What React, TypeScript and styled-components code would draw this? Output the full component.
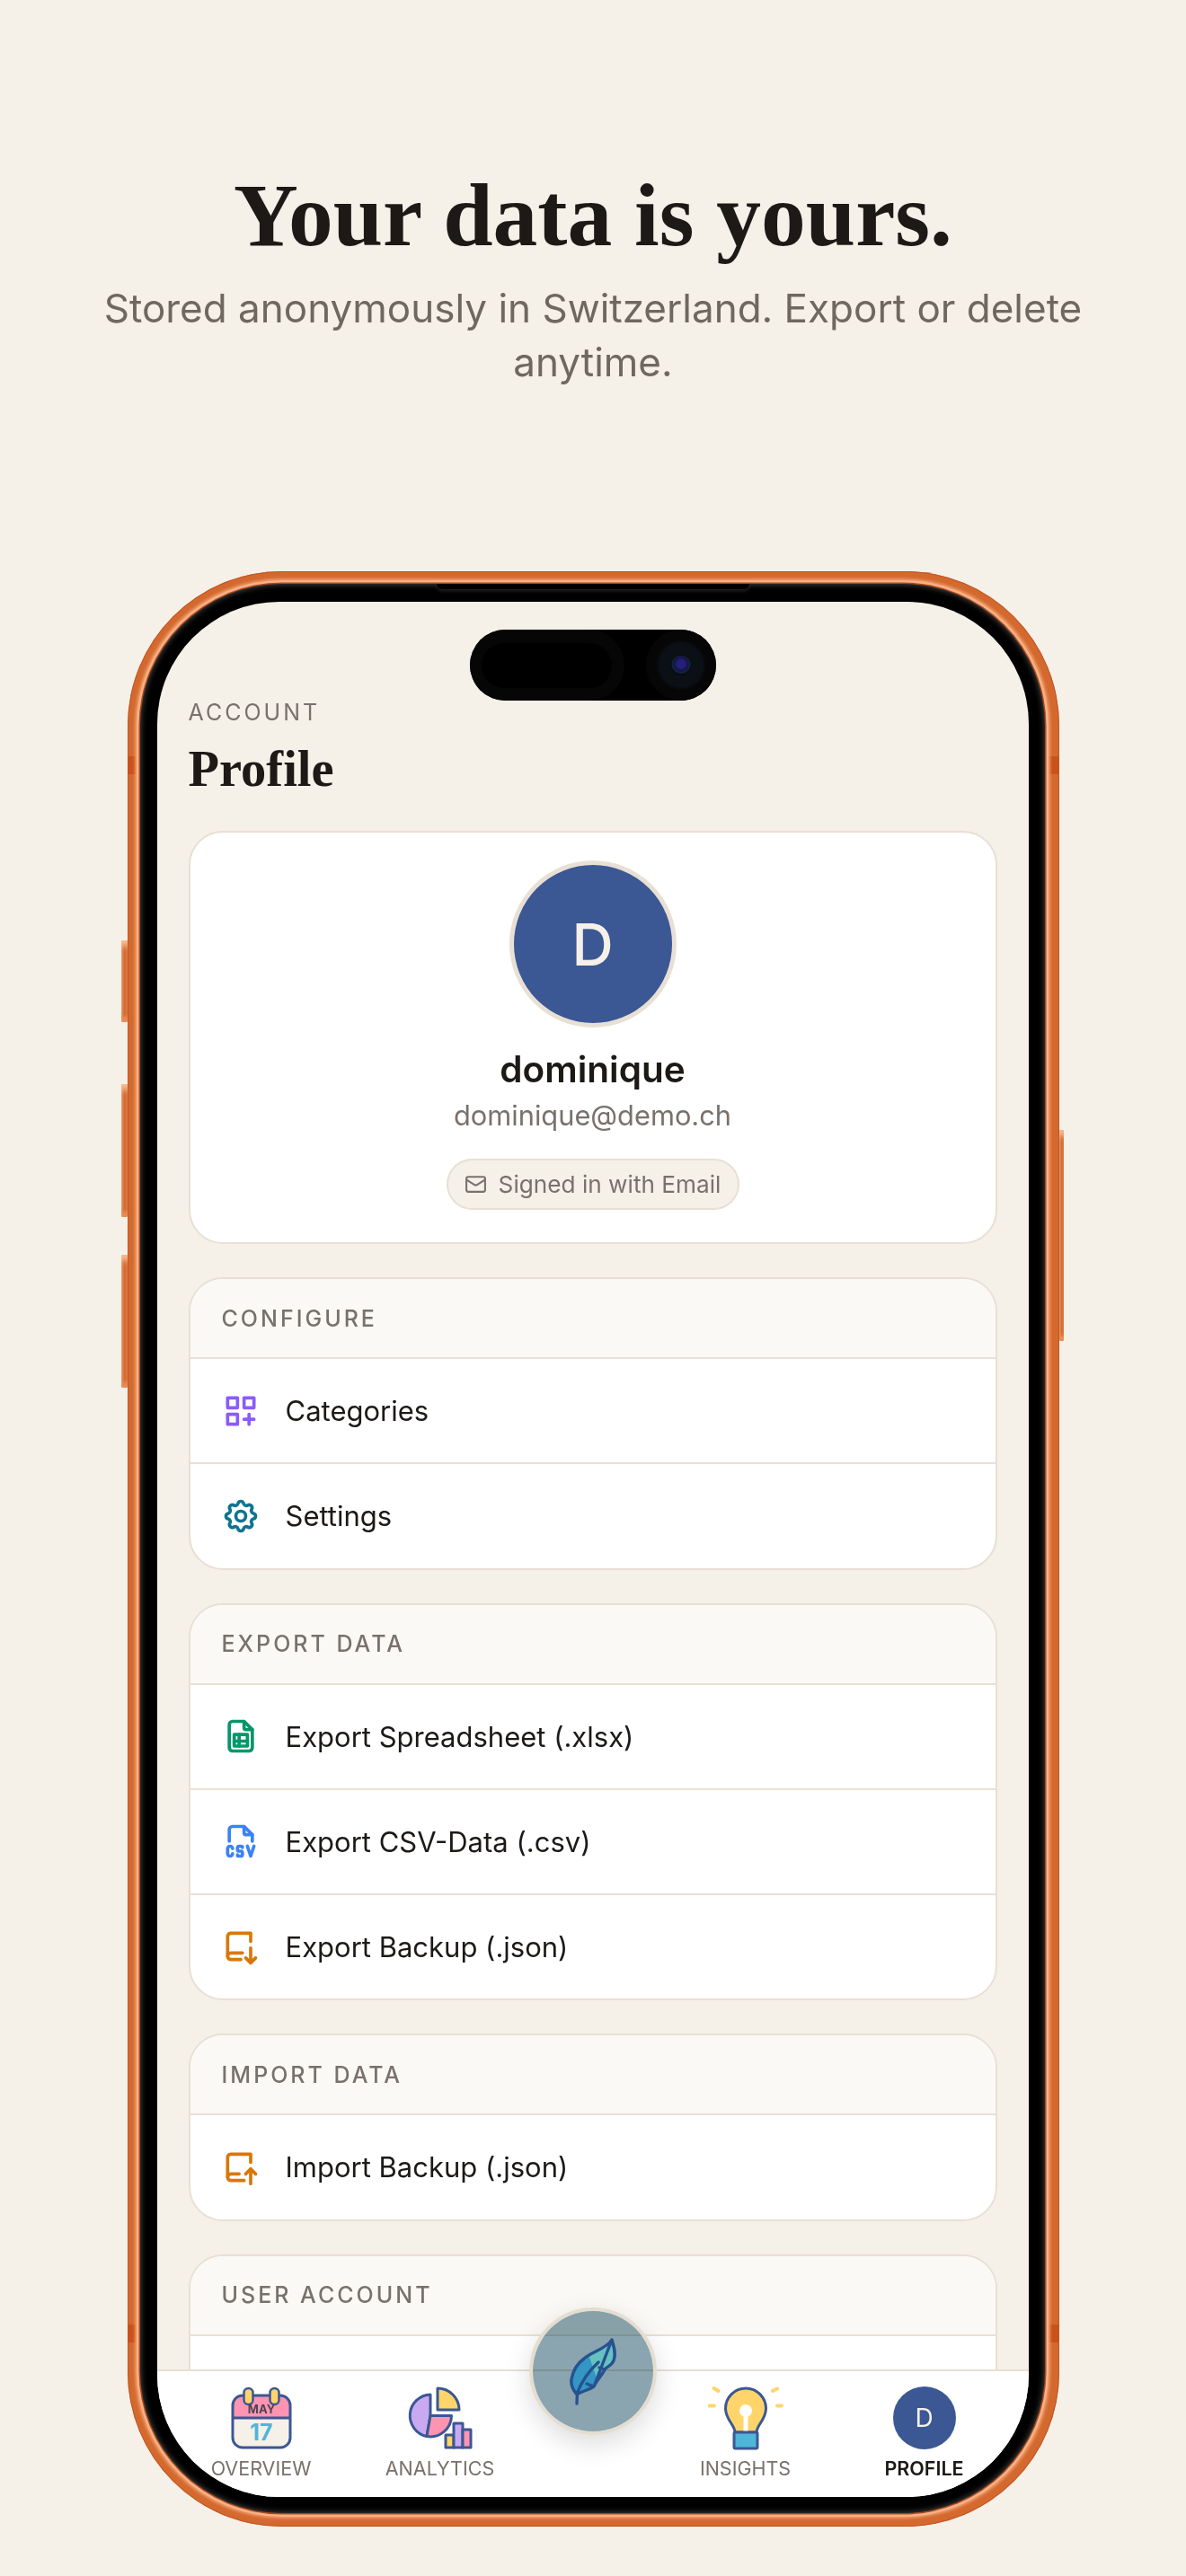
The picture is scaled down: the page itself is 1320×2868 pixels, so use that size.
import styled, { createGlobalStyle } from "styled-components";
import { Mail } from "lucide-react";
import {
  TbBookDownload,
  TbBookUpload,
  TbCategoryPlus,
  TbFileSpreadsheet,
  TbFileTypeCsv,
  TbSettings,
} from "react-icons/tb";
import type { ReactNode } from "react";

const ink = "#1c1917";
const muted = "#78716c";
const line = "#e8e0d4";
const cream = "#f5f0e8";
const navy = "#3b5794";
const sans = `Inter, "Noto Sans", sans-serif`;
const serif = `"Liberation Serif", serif`;

const Global = createGlobalStyle`
  html, body { margin: 0; padding: 0; background: ${cream}; }
  * { box-sizing: border-box; }
`;

const Page = styled.div`
  width: 1320px;
  height: 2868px;
  overflow: hidden;
  background: ${cream};
  display: flex;
  flex-direction: column;
  align-items: center;
  font-family: ${sans};
`;

const Hero = styled.header`
  width: 1120px;
  height: 636px;
  padding-top: 184px;
  text-align: center;
`;

const Headline = styled.h1`
  margin: 0;
  font-family: ${serif};
  font-size: 99.5px;
  line-height: 112px;
  font-weight: 700;
  color: ${ink};
`;

const Subhead = styled.p`
  margin: 17px 0 0;
  font-size: 44px;
  line-height: 60px;
  color: #6f6860;
`;

const Frame = styled.div`
  position: relative;
  width: 1037px;
  height: 2177px;
  flex: none;
  padding: 14px 16px 15px 14px;
  border-radius: 172px;
  background: #d4692f;
  box-shadow: inset 0 0 0 1px #bf5722;
`;

const Band = styled.span<{ $side: "left" | "right"; $at: "top" | "bottom" }>`
  position: absolute;
  ${(p) => p.$side}: 0;
  ${(p) => (p.$at === "top" ? "top: 206px" : "bottom: 205px")};
  width: 14px;
  height: 20px;
  background: #c9521b;
`;

const SideButton = styled.span<{ $side: "left" | "right"; $top: number; $height: number }>`
  position: absolute;
  ${(p) => p.$side}: ${(p) => (p.$side === "left" ? "-7px" : "-5px")};
  top: ${(p) => p.$top}px;
  width: ${(p) => (p.$side === "left" ? 7 : 5)}px;
  height: ${(p) => p.$height}px;
  border-radius: 2px;
  background: linear-gradient(90deg, #ea9763 0%, #d26a33 50%, #d9763c 100%);
  box-shadow: inset 0 10px 6px -4px #f7bb92, inset 0 -12px 4px -6px #e98d58;
`;

const Bezel = styled.div`
  position: relative;
  width: 100%;
  height: 100%;
  padding: 20px 18px 18px 19px;
  border-radius: 158px;
  background: #000;
  box-shadow: 0 0 0 1.5px #a9481a, 0 0 0 4px #f6b088, 0 0 3px 6px #ef9a66,
    inset 0 0 7px 0 rgba(255, 255, 255, 0.34);
`;

const TopEdge = styled.span`
  position: absolute;
  top: 0;
  left: 330px;
  width: 348px;
  height: 6px;
  border-radius: 0 0 12px 12px;
  background: #000;
  box-shadow: 0 2px 4px rgba(255, 255, 255, 0.14);
`;

const Screen = styled.div`
  position: relative;
  width: 970px;
  height: 2110px;
  border-radius: 136px;
  overflow: hidden;
  background: ${cream};
  display: flex;
  flex-direction: column;
`;

const Island = styled.div`
  position: absolute;
  top: 31px;
  left: 348px;
  width: 274px;
  height: 79px;
  border-radius: 40px;
  background: #000;
  display: flex;
  align-items: center;
  justify-content: space-between;
`;

const SensorRing = styled.span`
  width: 172px;
  height: 79px;
  border-radius: 40px;
  background: #060606;
  display: grid;
  place-items: center;
`;

const Sensor = styled.span`
  width: 145px;
  height: 50px;
  border-radius: 25px;
  background: #000;
`;

const CameraWell = styled.span`
  width: 78px;
  height: 79px;
  border-radius: 50%;
  display: grid;
  place-items: center;
  background: radial-gradient(circle, #0b0f16 0 24px, #060606 28px);
`;

const Lens = styled.span`
  width: 22px;
  height: 22px;
  border-radius: 50%;
  background: radial-gradient(circle at 50% 42%, #241f78 0 5px, #171048 7px, #0e2a3a 10px, #090b12 11px);
`;

const Main = styled.main`
  flex: 1;
  min-height: 0;
  overflow: hidden;
  padding: 106px 35px 0;
  display: flex;
  flex-direction: column;
`;

const Eyebrow = styled.div`
  font-size: 25px;
  line-height: 34px;
  letter-spacing: 3px;
  color: ${muted};
`;

const Title = styled.h2`
  margin: 14px 0 37px;
  font-family: ${serif};
  font-size: 56.5px;
  line-height: 64px;
  font-weight: 700;
  color: ${ink};
`;

const Card = styled.section`
  flex: none;
  border: 2.5px solid ${line};
  border-radius: 38px;
  overflow: hidden;
  background: #fff;
  margin-bottom: 37px;
`;

const ProfileBody = styled.div`
  height: 456px;
  padding-top: 31px;
  display: flex;
  flex-direction: column;
  align-items: center;
`;

const Avatar = styled.div`
  width: 186px;
  height: 186px;
  border-radius: 50%;
  border: 5px solid ${line};
  background: ${navy};
  color: ${cream};
  font-size: 64px;
  font-weight: 500;
  display: grid;
  place-items: center;
`;

const Name = styled.div`
  margin-top: 23px;
  font-size: 40.5px;
  line-height: 48px;
  font-weight: 600;
  color: ${ink};
`;

const Email = styled.div`
  margin-top: 6px;
  font-size: 30.8px;
  line-height: 42px;
  color: ${muted};
`;

const Pill = styled.div`
  margin-top: 27px;
  width: 326px;
  height: 57px;
  border-radius: 29px;
  border: 2.5px solid ${line};
  background: ${cream};
  color: ${muted};
  font-size: 26.2px;
  display: flex;
  align-items: center;
  justify-content: center;
  gap: 13px;
  white-space: nowrap;
`;

const CardHead = styled.div`
  height: 89px;
  padding-left: 35px;
  display: flex;
  align-items: center;
  background: #fbf9f6;
  border-bottom: 2.5px solid ${line};
  font-size: 25px;
  font-weight: 500;
  letter-spacing: 3px;
  color: ${muted};
`;

const Row = styled.div<{ $tone: string }>`
  height: 117px;
  padding-left: 34px;
  display: flex;
  align-items: center;
  gap: 28px;
  font-size: 31px;
  color: ${ink};
  border-bottom: 2.5px solid ${line};
  svg {
    flex: none;
    color: ${(p) => p.$tone};
  }
  &:last-child {
    height: 115.5px;
    border-bottom: none;
  }
`;

const TabBar = styled.nav`
  flex: none;
  height: 142px;
  border-top: 2.5px solid ${line};
  background: #fff;
  display: grid;
  grid-template-columns: 232px 166px 174px 166px 232px;
`;

const Tab = styled.div<{ $active?: boolean }>`
  padding-top: 16px;
  display: flex;
  flex-direction: column;
  align-items: center;
  font-size: 21.5px;
  line-height: 26px;
  font-weight: ${(p) => (p.$active ? 600 : 400)};
  color: ${(p) => (p.$active ? ink : muted)};
`;

const TabIcon = styled.div`
  height: 72px;
  margin-bottom: 7px;
  display: flex;
  align-items: center;
  justify-content: center;
`;

const TabAvatar = styled.div`
  width: 70px;
  height: 70px;
  border-radius: 50%;
  background: ${navy};
  color: ${cream};
  font-size: 28px;
  font-weight: 400;
  display: grid;
  place-items: center;
`;

const Fab = styled.button`
  position: absolute;
  left: calc(50% - 71px);
  bottom: 69px;
  width: 142px;
  height: 142px;
  padding: 0;
  border-radius: 50%;
  border: 4px solid #e5ddd0;
  background: transparent;
  box-shadow: 0 10px 30px rgba(0, 0, 0, 0.14);
  display: grid;
  place-items: center;
  &::before {
    content: "";
    position: absolute;
    inset: 0;
    border-radius: 50%;
    background: #8aa5af;
    mix-blend-mode: multiply;
  }
  svg {
    position: relative;
  }
`;

function CalendarIcon() {
  return (
    <svg width="68" height="70" viewBox="0 0 68 70">
      <rect x="2" y="10" width="64" height="58" rx="11" fill={cream} />
      <path d="M2 35V21a11 11 0 0 1 11-11h42a11 11 0 0 1 11 11v14z" fill="#ff94b2" />
      <rect x="2" y="10" width="64" height="58" rx="11" fill="none" stroke={navy} strokeWidth="3" />
      <path d="M2 35h64" stroke={navy} strokeWidth="3" />
      <rect x="14.5" y="2" width="10" height="18" rx="5" fill="#ffd56b" stroke={navy} strokeWidth="2.5" />
      <rect x="43.5" y="2" width="10" height="18" rx="5" fill="#ffd56b" stroke={navy} strokeWidth="2.5" />
      <text x="34" y="30" textAnchor="middle" fontFamily={sans} fontSize="13" fontWeight="700" fill="#4a4552">
        MAY
      </text>
      <text x="34" y="60" textAnchor="middle" fontFamily={sans} fontSize="25" fontWeight="700" fill="#4fb6d8">
        17
      </text>
    </svg>
  );
}

function AnalyticsIcon() {
  return (
    <svg width="72" height="70" viewBox="0 0 72 70">
      <path d="M25 9A23.5 23.5 0 0 0 21 55.5L25 32.5z" fill="#c9aaf0" stroke={navy} strokeWidth="3" strokeLinejoin="round" />
      <path d="M25 32.5H48.5A23.5 23.5 0 0 1 21 55.5z" fill="#ff94b2" stroke={navy} strokeWidth="3" strokeLinejoin="round" />
      <path d="M33 2V26H57A24 24 0 0 0 33 2z" fill="#ffd56b" stroke={navy} strokeWidth="3" strokeLinejoin="round" />
      <rect x="42" y="54" width="9" height="14" fill="#ffd56b" stroke={navy} strokeWidth="3" strokeLinejoin="round" />
      <rect x="51" y="41" width="10" height="27" fill="#c9aaf0" stroke={navy} strokeWidth="3" strokeLinejoin="round" />
      <rect x="61" y="48" width="9" height="20" fill="#ff94b2" stroke={navy} strokeWidth="3" strokeLinejoin="round" />
    </svg>
  );
}

function InsightsIcon() {
  return (
    <svg width="84" height="72" viewBox="0 0 84 72">
      <path d="M6.5 2L11.5 5M1.5 21.5H7M77 2.5L72 5M77 21.5H82" stroke="#ffd56b" strokeWidth="4" strokeLinecap="round" transform="translate(0 1)" />
      <path
        d="M30 52C30 44 19.5 38 19.5 25.5A22.5 22.5 0 0 1 64.5 25.5C64.5 38 54 44 54 52z"
        fill="#ffd56b"
        stroke={navy}
        strokeWidth="3"
        strokeLinejoin="round"
      />
      <circle cx="42" cy="28" r="7" fill="#fff" />
      <rect x="39.5" y="30" width="5" height="22" fill="#fff" />
      <rect x="29" y="52" width="26" height="18" rx="1.5" fill="#4fb6d8" stroke={navy} strokeWidth="3" strokeLinejoin="round" />
    </svg>
  );
}

function FeatherIcon() {
  return (
    <svg width="54" height="76" viewBox="0 0 54 76">
      <path
        d="M48 3C50 10 53 18 50 26C48 32 42 33 40 36C37 43 31 48 28 55C21 60 14 60 9 64C4 58 2 53 3 47C5 36 10 29 17 24C26 16 42 13 48 3z"
        fill="#3396c4"
      />
      <path d="M48 3C50 10 53 18 50 26C48 32 42 33 40 36C37 40 34 42 31 45L22 20C30 15 42 13 48 3z" fill="#66c2c0" />
      <path
        d="M48 3C50 10 53 18 50 26C48 32 42 33 40 36L34 34M40 36C37 43 31 48 28 55L20 52M28 55C21 60 14 60 9 64C4 58 2 53 3 47C5 36 10 29 17 24C26 16 42 13 48 3zM9 74L9.5 62C15 48 22 38 33 28"
        fill="none"
        stroke="#265290"
        strokeWidth="3.4"
        strokeLinecap="round"
        strokeLinejoin="round"
      />
    </svg>
  );
}

const configure = [
  { label: "Categories", tone: "#8b5cf6", icon: <TbCategoryPlus size={44} /> },
  { label: "Settings", tone: "#0e7490", icon: <TbSettings size={44} /> },
];

const exports = [
  { label: "Export Spreadsheet (.xlsx)", tone: "#059669", icon: <TbFileSpreadsheet size={44} /> },
  { label: "Export CSV-Data (.csv)", tone: "#3b82f6", icon: <TbFileTypeCsv size={44} /> },
  { label: "Export Backup (.json)", tone: "#d97706", icon: <TbBookDownload size={44} /> },
];

const imports = [{ label: "Import Backup (.json)", tone: "#d97706", icon: <TbBookUpload size={44} /> }];

// the last row sits behind the tab bar, only its top edge shows
const account = [{ label: "", tone: muted, icon: null }];

function Section({ title, rows }: { title: string; rows: { label: string; tone: string; icon: ReactNode }[] }) {
  return (
    <Card>
      <CardHead>{title}</CardHead>
      {rows.map((row) => (
        <Row key={row.label} $tone={row.tone}>
          {row.icon}
          {row.label}
        </Row>
      ))}
    </Card>
  );
}

export default function App() {
  return (
    <Page>
      <Global />
      <Hero>
        <Headline>Your data is yours.</Headline>
        <Subhead>Stored anonymously in Switzerland. Export or delete anytime.</Subhead>
      </Hero>
      <Frame>
        <SideButton $side="left" $top={411} $height={91} />
        <SideButton $side="left" $top={571} $height={148} />
        <SideButton $side="left" $top={761} $height={148} />
        <SideButton $side="right" $top={622} $height={235} />
        <Band $side="left" $at="top" />
        <Band $side="right" $at="top" />
        <Band $side="left" $at="bottom" />
        <Band $side="right" $at="bottom" />
        <Bezel>
          <TopEdge />
          <Screen>
            <Main>
              <Eyebrow>ACCOUNT</Eyebrow>
              <Title>Profile</Title>
              <Card>
                <ProfileBody>
                  <Avatar>D</Avatar>
                  <Name>dominique</Name>
                  <Email>dominique@demo.ch</Email>
                  <Pill>
                    <Mail size={25} strokeWidth={2} />
                    Signed in with Email
                  </Pill>
                </ProfileBody>
              </Card>
              <Section title="CONFIGURE" rows={configure} />
              <Section title="EXPORT DATA" rows={exports} />
              <Section title="IMPORT DATA" rows={imports} />
              <Section title="USER ACCOUNT" rows={account} />
            </Main>
            <TabBar>
              <Tab>
                <TabIcon>
                  <CalendarIcon />
                </TabIcon>
                OVERVIEW
              </Tab>
              <Tab>
                <TabIcon>
                  <AnalyticsIcon />
                </TabIcon>
                ANALYTICS
              </Tab>
              <span />
              <Tab>
                <TabIcon>
                  <InsightsIcon />
                </TabIcon>
                INSIGHTS
              </Tab>
              <Tab $active>
                <TabIcon>
                  <TabAvatar>D</TabAvatar>
                </TabIcon>
                PROFILE
              </Tab>
            </TabBar>
            <Island>
              <SensorRing>
                <Sensor />
              </SensorRing>
              <CameraWell>
                <Lens />
              </CameraWell>
            </Island>
            <Fab aria-label="Add entry">
              <FeatherIcon />
            </Fab>
          </Screen>
        </Bezel>
      </Frame>
    </Page>
  );
}
